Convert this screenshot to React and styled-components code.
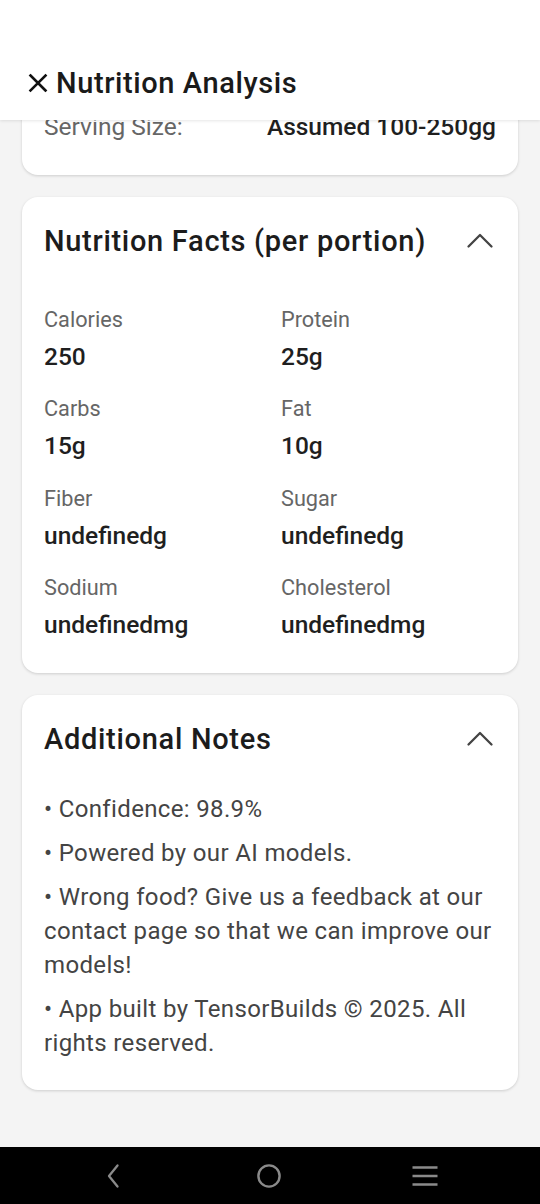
import React, { useLayoutEffect, useRef } from "react";
import styled, { createGlobalStyle } from "styled-components";

const GlobalStyle = createGlobalStyle`
  html, body {
    margin: 0;
    padding: 0;
    height: 100%;
    overflow: hidden;
    background: #f4f4f4;
  }
  body {
    font-family: Roboto, "Noto Sans", "Liberation Sans", sans-serif;
    -webkit-font-smoothing: antialiased;
  }
  #root {
    height: 100%;
  }
`;

const facts = [
  { label: "Calories", value: "250" },
  { label: "Protein", value: "25g" },
  { label: "Carbs", value: "15g" },
  { label: "Fat", value: "10g" },
  { label: "Fiber", value: "undefinedg" },
  { label: "Sugar", value: "undefinedg" },
  { label: "Sodium", value: "undefinedmg" },
  { label: "Cholesterol", value: "undefinedmg" },
];

const notes = [
  "• Confidence: 98.9%",
  "• Powered by our AI models.",
  "• Wrong food? Give us a feedback at our contact page so that we can improve our models!",
  "• App built by TensorBuilds © 2025. All rights reserved.",
];

const ChevronUp = () => (
  <svg width="28" height="28" viewBox="0 0 28 28" fill="none">
    <path d="M2.5 19.5L14 8l11.5 11.5" stroke="#444" strokeWidth="2.3" strokeLinecap="round" strokeLinejoin="round" />
  </svg>
);

const CloseIcon = () => (
  <svg width="20" height="20" viewBox="0 0 20 20" fill="none">
    <path d="M2.5 2.5l15 15M17.5 2.5l-15 15" stroke="#111" strokeWidth="2.6" strokeLinecap="square" />
  </svg>
);

const App = () => {
  const scrollRef = useRef(null);

  // the screenshot shows the list scrolled all the way down
  useLayoutEffect(() => {
    const el = scrollRef.current;
    if (el) el.scrollTop = el.scrollHeight;
  }, []);

  return (
    <Screen>
      <GlobalStyle />
      <Header>
        <TitleRow>
          <CloseButton aria-label="close">
            <CloseIcon />
          </CloseButton>
          <Title>Nutrition Analysis</Title>
        </TitleRow>
      </Header>

      <Scroll ref={scrollRef}>
        <Content>
          <Card $bottom={33}>
            <CardHead>
              <CardTitle>Food Details</CardTitle>
              <ChevronUp />
            </CardHead>
            <InfoRow>
              <InfoLabel>Food:</InfoLabel>
              <InfoValue>Grilled Chicken</InfoValue>
            </InfoRow>
            <InfoRow>
              <InfoLabel>Serving Size:</InfoLabel>
              <InfoValue>Assumed 100-250gg</InfoValue>
            </InfoRow>
          </Card>

          <Card $bottom={33}>
            <CardHead>
              <CardTitle>Nutrition Facts (per portion)</CardTitle>
              <ChevronUp />
            </CardHead>
            <FactsGrid>
              {facts.map((f) => (
                <Fact key={f.label}>
                  <FactLabel>{f.label}</FactLabel>
                  <FactValue>{f.value}</FactValue>
                </Fact>
              ))}
            </FactsGrid>
          </Card>

          <Card $bottom={30}>
            <CardHead>
              <CardTitle>Additional Notes</CardTitle>
              <ChevronUp />
            </CardHead>
            <Notes>
              {notes.map((n) => (
                <Note key={n}>{n}</Note>
              ))}
            </Notes>
          </Card>
        </Content>
      </Scroll>

      <NavBar>
        <NavButton aria-label="back">
          <svg width="24" height="28" viewBox="0 0 24 28" fill="none">
            <path d="M16.5 3.5L8 14l8.5 10.5" stroke="#8a8a8a" strokeWidth="2.3" strokeLinecap="round" strokeLinejoin="round" />
          </svg>
        </NavButton>
        <NavButton aria-label="home">
          <svg width="28" height="28" viewBox="0 0 28 28" fill="none">
            <circle cx="14" cy="14" r="10.6" stroke="#8a8a8a" strokeWidth="2.4" />
          </svg>
        </NavButton>
        <NavButton aria-label="recents">
          <svg width="28" height="28" viewBox="0 0 28 28" fill="none">
            <path d="M1.5 5.5h25M1.5 14h25M1.5 22.5h25" stroke="#8a8a8a" strokeWidth="2.6" />
          </svg>
        </NavButton>
      </NavBar>
    </Screen>
  );
};

const Screen = styled.div`
  display: flex;
  flex-direction: column;
  width: 540px;
  height: 1204px;
  background: #f4f4f4;
`;

const Header = styled.header`
  position: relative;
  z-index: 2;
  flex: 0 0 120px;
  display: flex;
  align-items: flex-end;
  background: #fff;
  box-shadow: 0 1px 3px rgba(0, 0, 0, 0.1);
`;

const TitleRow = styled.div`
  display: flex;
  align-items: center;
  gap: 8px;
  height: 36px;
  padding: 0 0 19px 28px;
`;

const CloseButton = styled.button`
  display: flex;
  align-items: center;
  justify-content: center;
  padding: 0;
  border: 0;
  background: none;
`;

const Title = styled.h1`
  margin: 0;
  font-size: 29px;
  font-weight: 500;
  letter-spacing: 0.6px;
  color: #1a1a1a;
`;

const Scroll = styled.main`
  flex: 1 1 auto;
  overflow: hidden;
`;

const Content = styled.div`
  display: flex;
  flex-direction: column;
  gap: 22px;
  padding: 22px 22px 57px;
`;

const Card = styled.section`
  background: #fff;
  border-radius: 16px;
  box-shadow: 0 1px 3px rgba(0, 0, 0, 0.16);
  padding: 22px 22px ${(p) => p.$bottom}px;
`;

const CardHead = styled.div`
  display: flex;
  align-items: center;
  justify-content: space-between;
  height: 44px;
  padding-right: 2px;
`;

const CardTitle = styled.h2`
  margin: 0;
  font-size: 29px;
  font-weight: 500;
  letter-spacing: 0.7px;
  color: #1c1c1c;
`;

const InfoRow = styled.div`
  display: flex;
  justify-content: space-between;
  align-items: center;
  margin-top: 16px;
  font-size: 24.5px;
  line-height: 30px;
`;

const InfoLabel = styled.span`
  color: #666;
`;

const InfoValue = styled.span`
  color: #1f1f1f;
  font-weight: 500;
`;

const FactsGrid = styled.div`
  display: grid;
  grid-template-columns: 215px 215px;
  column-gap: 22px;
  row-gap: 23.4px;
  margin-top: 43px;
`;

const Fact = styled.div`
  display: flex;
  flex-direction: column;
  gap: 8px;
`;

const FactLabel = styled.span`
  font-size: 21.7px;
  line-height: 28px;
  color: #666;
`;

const FactValue = styled.span`
  font-size: 24.5px;
  line-height: 30px;
  font-weight: 500;
  color: #1f1f1f;
`;

const Notes = styled.div`
  display: flex;
  flex-direction: column;
  gap: 10px;
  margin-top: 31px;
`;

const Note = styled.p`
  margin: 0;
  font-size: 24px;
  line-height: 34px;
  letter-spacing: 0.35px;
  color: #444;
`;

const NavBar = styled.nav`
  flex: 0 0 57px;
  display: grid;
  grid-template-columns: repeat(3, 1fr);
  align-items: center;
  justify-items: center;
  padding: 0 37px 0 35px;
  background: #000;
`;

const NavButton = styled.button`
  display: flex;
  align-items: center;
  justify-content: center;
  width: 48px;
  height: 48px;
  padding: 0;
  border: 0;
  background: none;
`;

export default App;
